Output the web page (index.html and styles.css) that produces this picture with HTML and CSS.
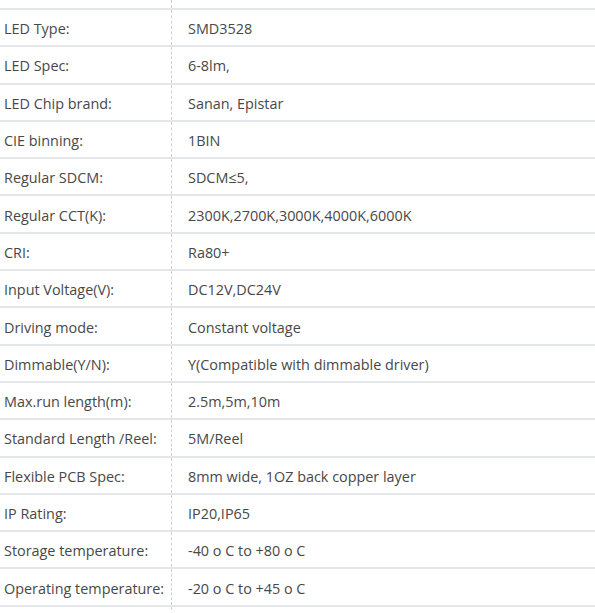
FILE: index.html
```html
<!DOCTYPE html>
<html>
<head>
<meta charset="utf-8">
<link rel="stylesheet" href="styles.css">
</head>
<body>
<div class="spec">
  <div class="row top"><div class="k"></div><div class="v"></div></div>
  <div class="row"><div class="k">LED Type:</div><div class="v">SMD3528</div></div>
  <div class="row"><div class="k">LED Spec:</div><div class="v">6-8lm,</div></div>
  <div class="row"><div class="k">LED Chip brand:</div><div class="v">Sanan, Epistar</div></div>
  <div class="row"><div class="k">CIE binning:</div><div class="v">1BIN</div></div>
  <div class="row"><div class="k">Regular SDCM:</div><div class="v">SDCM≤5,</div></div>
  <div class="row"><div class="k">Regular CCT(K):</div><div class="v">2300K,2700K,3000K,4000K,6000K</div></div>
  <div class="row"><div class="k">CRI:</div><div class="v">Ra80+</div></div>
  <div class="row"><div class="k">Input Voltage(V):</div><div class="v">DC12V,DC24V</div></div>
  <div class="row"><div class="k">Driving mode:</div><div class="v">Constant voltage</div></div>
  <div class="row"><div class="k">Dimmable(Y/N):</div><div class="v">Y(Compatible with dimmable driver)</div></div>
  <div class="row"><div class="k">Max.run length(m):</div><div class="v">2.5m,5m,10m</div></div>
  <div class="row"><div class="k">Standard Length /Reel:</div><div class="v">5M/Reel</div></div>
  <div class="row"><div class="k">Flexible PCB Spec:</div><div class="v">8mm wide, 1OZ back copper layer</div></div>
  <div class="row"><div class="k">IP Rating:</div><div class="v">IP20,IP65</div></div>
  <div class="row"><div class="k">Storage temperature:</div><div class="v">-40 o C to +80 o C</div></div>
  <div class="row"><div class="k">Operating temperature:</div><div class="v">-20 o C to +45 o C</div></div>
  <div class="row"><div class="k"></div><div class="v"></div></div>
</div>
</body>
</html>
```
FILE: styles.css
```css
html, body {
  margin: 0;
  padding: 0;
  background: #ffffff;
}
body {
  font-family: "Open Sans", "Noto Sans", sans-serif;
  font-size: 14.4px;
  color: #484848;
  overflow: hidden;
}
.spec {
  display: flex;
  flex-direction: column;
}
.row {
  display: grid;
  grid-template-columns: 172px 1fr;
  height: 37.3px;
  box-sizing: border-box;
  border-top: 2px solid #e3e7ea;
}
.row.top {
  height: 8px;
  border-top: none;
}
.k {
  display: flex;
  align-items: center;
  padding-left: 4px;
  padding-top: 2px;
  border-right: 1px dashed #cfcfcf;
  white-space: nowrap;
}
.v {
  display: flex;
  align-items: center;
  padding-left: 16px;
  padding-top: 2px;
  white-space: nowrap;
}
```
